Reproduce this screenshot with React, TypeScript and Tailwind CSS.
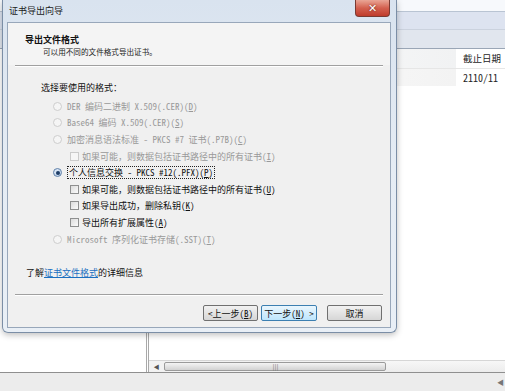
const font = "font-['Noto_Sans_Mono_CJK_SC','Noto_Sans_CJK_SC',monospace]";

type Opt = {
  kind: 'radio' | 'check';
  label: string;
  disabled?: boolean;
  checked?: boolean;
  focus?: boolean;
};

const options: Opt[] = [
  { kind: 'radio', label: 'DER 编码二进制 X.509(.CER)(&D)', disabled: true },
  { kind: 'radio', label: 'Base64 编码 X.509(.CER)(&S)', disabled: true },
  { kind: 'radio', label: '加密消息语法标准 - PKCS #7 证书(.P7B)(&C)', disabled: true },
  { kind: 'check', label: '如果可能，则数据包括证书路径中的所有证书(&I)', disabled: true },
  { kind: 'radio', label: '个人信息交换 - PKCS #12(.PFX)(&P)', checked: true, focus: true },
  { kind: 'check', label: '如果可能，则数据包括证书路径中的所有证书(&U)' },
  { kind: 'check', label: '如果导出成功，删除私钥(&K)' },
  { kind: 'check', label: '导出所有扩展属性(&A)' },
  { kind: 'radio', label: 'Microsoft 序列化证书存储(.SST)(&T)', disabled: true },
];

// '&' marks the accelerator letter, like the win32 resource strings
function Mn({ text }: { text: string }) {
  const i = text.indexOf('&');
  if (i < 0) return <>{text}</>;
  return (
    <>
      {text.slice(0, i)}
      <span className="underline underline-offset-1">{text[i + 1]}</span>
      {text.slice(i + 2)}
    </>
  );
}

function Radio({ checked, disabled }: { checked?: boolean; disabled?: boolean }) {
  if (disabled)
    return <span className="w-[9px] h-[9px] rounded-full border border-[#cdcdcd] bg-[#f5f5f5] shrink-0" />;
  return (
    <span className="w-[9px] h-[9px] rounded-full border border-[#5d7fa8] bg-gradient-to-br from-[#e4eefa] to-[#b9cde6] flex items-center justify-center shrink-0">
      {checked && <span className="w-[4px] h-[4px] rounded-full bg-[#1d3c66]" />}
    </span>
  );
}

function Check({ disabled }: { disabled?: boolean }) {
  return disabled ? (
    <span className="w-[9px] h-[9px] border border-[#cbcbcb] bg-[#f6f6f6] shrink-0" />
  ) : (
    <span className="w-[9px] h-[9px] border border-[#8e8f8f] bg-gradient-to-br from-[#dcdcdc] to-[#fbfbfb] shrink-0" />
  );
}

function Button({ children, focused }: { children: React.ReactNode; focused?: boolean }) {
  return (
    <button
      className={
        focused
          ? 'h-[16px] w-[56px] rounded-[2px] border border-[#3c7fb1] bg-gradient-to-b from-[#eaf6fd] to-[#bee6fd] text-[9px] leading-none text-[#111]'
          : 'h-[16px] w-[55px] rounded-[2px] border border-[#707070] bg-gradient-to-b from-[#f2f2f2] to-[#d6d6d6] text-[9px] leading-none text-[#111]'
      }
    >
      {children}
    </button>
  );
}

function ParentWindow() {
  return (
    <div className={`w-full h-full flex flex-col bg-white ${font}`}>
      {/* toolbar bands of the certificate manager behind */}
      <div className="h-[12px] bg-[#f7f9fc] border-b border-[#b9c4d3]" />
      <div className="h-[18px] bg-[#dde3f0] border-b border-[#cbd2de]" />
      <div className="h-[19px] bg-[#e1e6ee] border-b border-[#9aa6b6]" />
      <div className="flex-1 flex min-h-0">
        <div className="w-[149px] shrink-0 bg-white border-r-[3px] border-double border-[#a9a9a9]" />
        <div className="flex-1 flex flex-col min-w-0 overflow-hidden">
          <div className="h-[20px] flex text-[9.5px] text-[#1e1e1e] border-b border-[#e6e6e6]">
            <div className="w-[307px] shrink-0 bg-gradient-to-r from-white to-[#f1f2f3]" />
            <div className="pl-[7px] flex items-center whitespace-nowrap">截止日期</div>
          </div>
          <div className="h-[17px] flex text-[10px] text-[#1e1e1e]">
            <div className="w-[307px] shrink-0 bg-gradient-to-r from-white to-[#f3f3f3]" />
            <div className="pl-[7px] flex items-center whitespace-nowrap">2110/11</div>
          </div>
          <div className="flex-1" />
          <div className="h-[12px] flex items-stretch border-t border-[#d6d6d6] bg-[#f2f2f2]">
            <div className="w-[15px] shrink-0 flex items-center justify-center text-[6px] text-[#555]">◀</div>
            <div className="w-[222px] shrink-0 my-[1px] rounded-[2px] border border-[#9a9a9a] bg-gradient-to-b from-[#f4f4f4] to-[#d2d2d2] flex items-center justify-center">
              <span className="text-[6px] leading-none text-[#666] tracking-[-1px]">|||</span>
            </div>
            <div className="flex-1 bg-gradient-to-b from-[#f7f7f7] to-[#ececec]" />
          </div>
        </div>
      </div>
      <div className="h-[19px] border-t border-[#8f8f8f] bg-[#ececec] flex justify-end items-center pr-[1px]">
        <span className="text-[7px] text-[#777]">◀</span>
      </div>
    </div>
  );
}

function Wizard() {
  return (
    <div className={`absolute left-[2px] top-0 w-[395px] h-[333px] rounded-b-[6px] border border-t-0 border-[#7b8ea6] bg-gradient-to-b from-[#d9e3ef] via-[#e5ecf4] to-[#e9eff6] flex flex-col shadow-[0_2px_6px_rgba(0,0,0,0.25)] ${font}`}>
      {/* title bar */}
      <div className="h-[22px] flex items-center pl-[6px] text-[9px] text-[#1b1b1b] relative">
        <span>证书导出向导</span>
        <div className="absolute right-[6px] top-0 w-[35px] h-[17px] rounded-b-[4px] border border-t-0 border-[#7a3a32] bg-gradient-to-b from-[#e9a596] via-[#d3604f] to-[#bf3b2b] flex items-center justify-center">
          <span className="text-white text-[11px] font-bold leading-none [text-shadow:0_0_2px_#5a1a10] font-['DejaVu_Sans',sans-serif]">✕</span>
        </div>
      </div>

      {/* client area */}
      <div className="ml-[4px] mr-[5px] h-[306px] border border-[#98a7ba] bg-[#f0f0f0] flex flex-col">
        <div className="h-[42px] bg-[#f4f4f4] flex flex-col pl-[17px] pt-[11px]">
          <div className="text-[9px] leading-[12px] font-bold text-[#111]">导出文件格式</div>
          <div className="text-[7.6px] leading-[11px] text-[#222] pl-[18px]">可以用不同的文件格式导出证书。</div>
        </div>
        <div className="mx-[7px] border-t border-[#a0a0a0] border-b border-b-white" />

        <div className="flex-1 flex flex-col px-[18px] pt-[15px]">
          <div className="pl-[15px] text-[9px] leading-[12px] text-[#111]">选择要使用的格式：</div>
          <div className="pl-[15px] mt-[4px] flex flex-col">
            {options.map((o, i) => (
              <div
                key={i}
                className={
                  o.kind === 'radio'
                    ? 'h-[16.6px] flex items-center gap-[5px] pl-[12px]'
                    : 'h-[16.6px] flex items-center gap-[3px] pl-[29px]'
                }
              >
                {o.kind === 'radio' ? <Radio checked={o.checked} disabled={o.disabled} /> : <Check disabled={o.disabled} />}
                <span
                  className={
                    (o.disabled ? 'text-[#999999] ' : 'text-[#111] ') +
                    (o.focus ? 'border border-dotted border-[#222] px-[1px] ' : '') +
                    'text-[9px] leading-[11px] whitespace-nowrap'
                  }
                >
                  <Mn text={o.label} />
                </span>
              </div>
            ))}
          </div>
          <div className="mt-[20px] text-[9px] leading-[12px] text-[#111]">
            了解<span className="text-[#1a6fc0] underline">证书文件格式</span>的详细信息
          </div>
        </div>

        <div className="mx-[7px] border-t border-[#a0a0a0] border-b border-b-white" />
        <div className="h-[31px] flex justify-end items-start pt-[9px] pr-[8px]">
          <Button>&lt;上一步(<span className="underline">B</span>)</Button>
          <div className="w-[3px]" />
          <Button focused>下一步(<span className="underline">N</span>) &gt;</Button>
          <div className="w-[10px]" />
          <Button>取消</Button>
        </div>
      </div>
    </div>
  );
}

export default function App() {
  return (
    <div className="relative w-[505px] h-[391px] overflow-hidden bg-white">
      <ParentWindow />
      <Wizard />
    </div>
  );
}
